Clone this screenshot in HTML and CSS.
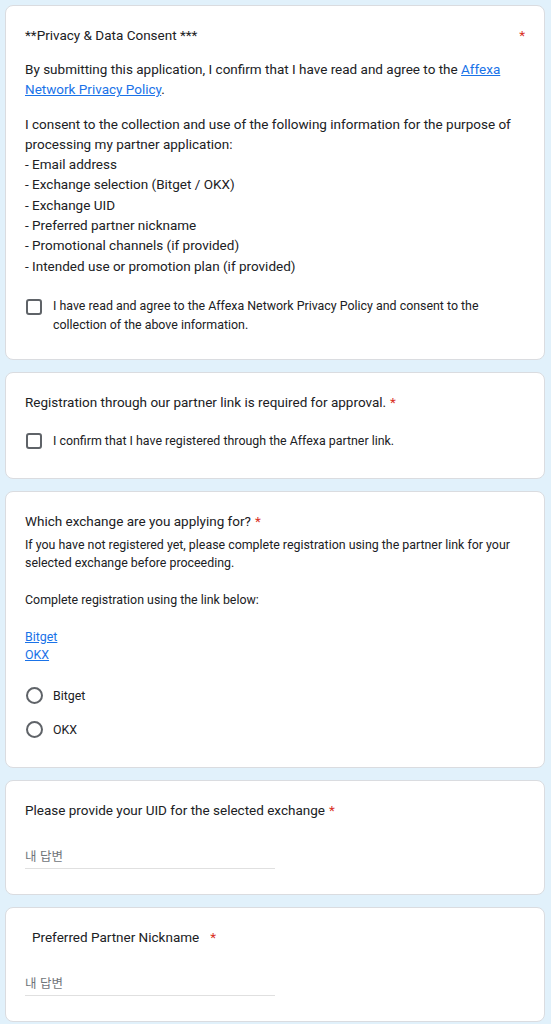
FILE: index.html
```html
<!DOCTYPE html>
<html lang="ko">
<head>
<meta charset="utf-8">
<link rel="stylesheet" href="styles.css">
</head>
<body>
<main class="form">
  <section class="card">
    <div class="title-row spread">
      <span>**Privacy &amp; Data Consent ***</span>
      <span class="req">*</span>
    </div>
    <p class="body-text">By submitting this application, I confirm that I have read and agree to the <a href="#">Affexa Network Privacy Policy</a>.</p>
    <p class="body-text">I consent to the collection and use of the following information for the purpose of processing my partner application:<br>- Email address<br>- Exchange selection (Bitget / OKX)<br>- Exchange UID<br>- Preferred partner nickname<br>- Promotional channels (if provided)<br>- Intended use or promotion plan (if provided)</p>
    <label class="check check-first">
      <span class="box"></span>
      <span class="check-label">I have read and agree to the Affexa Network Privacy Policy and consent to the collection of the above information.</span>
    </label>
  </section>

  <section class="card">
    <div class="title-row">
      <span>Registration through our partner link is required for approval.</span>
      <span class="req">*</span>
    </div>
    <label class="check check-second">
      <span class="box"></span>
      <span class="check-label">I confirm that I have registered through the Affexa partner link.</span>
    </label>
  </section>

  <section class="card">
    <div class="title-row">
      <span>Which exchange are you applying for?</span>
      <span class="req">*</span>
    </div>
    <div class="desc">
      <div>If you have not registered yet, please complete registration using the partner link for your selected exchange before proceeding.</div>
      <div class="blank"></div>
      <div>Complete registration using the link below:</div>
      <div class="blank"></div>
      <div><a href="#">Bitget</a></div>
      <div><a href="#">OKX</a></div>
    </div>
    <div class="radios">
      <label class="radio"><span class="circle"></span><span>Bitget</span></label>
      <label class="radio"><span class="circle"></span><span>OKX</span></label>
    </div>
  </section>

  <section class="card">
    <div class="title-row">
      <span>Please provide your UID for the selected exchange</span>
      <span class="req">*</span>
    </div>
    <div class="answer"><span class="placeholder">내 답변</span></div>
  </section>

  <section class="card">
    <div class="title-row">
      <span class="indent">Preferred Partner Nickname</span>
      <span class="req wide">*</span>
    </div>
    <div class="answer"><span class="placeholder">내 답변</span></div>
  </section>
</main>
</body>
</html>
```
FILE: styles.css
```css
* { box-sizing: border-box; }
html, body { margin: 0; padding: 0; }
body {
  background: #e1f1fb;
  font-family: Roboto, "Liberation Sans", "Noto Sans CJK KR", sans-serif;
  color: #202124;
}
.form {
  display: flex;
  flex-direction: column;
  gap: 12px;
  padding: 5px 6px 5px 5px;
}
.card {
  background: #fff;
  border: 1px solid #dadce0;
  border-radius: 8px;
  padding: 19px 19px 25px 19px;
}
.title-row {
  display: flex;
  gap: 4px;
  font-size: 13.5px;
  line-height: 20px;
}
.title-row.spread { justify-content: space-between; }
.req { color: #d93025; }
.req.wide { margin-left: 7px; }
.indent { padding-left: 7px; }
.body-text {
  margin: 14px 0 0 0;
  font-size: 13.5px;
  line-height: 20.3px;
}
a { color: #1a73e8; text-decoration: underline; }
.check {
  display: flex;
  align-items: flex-start;
  gap: 11px;
  font-size: 12.4px;
  line-height: 19px;
}
.check-first { margin-top: 20px; }
.check-second { margin-top: 19px; padding-bottom: 3px; }
.box {
  flex: none;
  width: 16px;
  height: 16px;
  border: 2px solid #5f6368;
  border-radius: 3px;
  margin: 2px 0 0 1px;
}
.check-first .box { margin-top: 3px; }
.desc {
  margin-top: 5px;
  font-size: 12.4px;
  line-height: 18.4px;
}
.blank { height: 18.4px; }
.radios {
  display: flex;
  flex-direction: column;
  gap: 10px;
  margin-top: 19px;
}
.radio {
  display: flex;
  align-items: center;
  gap: 10px;
  height: 24px;
  font-size: 12.4px;
}
.circle {
  width: 17px;
  height: 17px;
  border: 2px solid #5f6368;
  border-radius: 50%;
  margin-left: 1px;
}
.answer {
  margin-top: 23px;
  width: 250px;
  height: 26px;
  border-bottom: 1px solid #e0e0e0;
  display: flex;
  align-items: center;
}
.placeholder {
  font-family: "Noto Sans CJK KR", sans-serif;
  font-size: 12.5px;
  color: #70757a;
}
```
